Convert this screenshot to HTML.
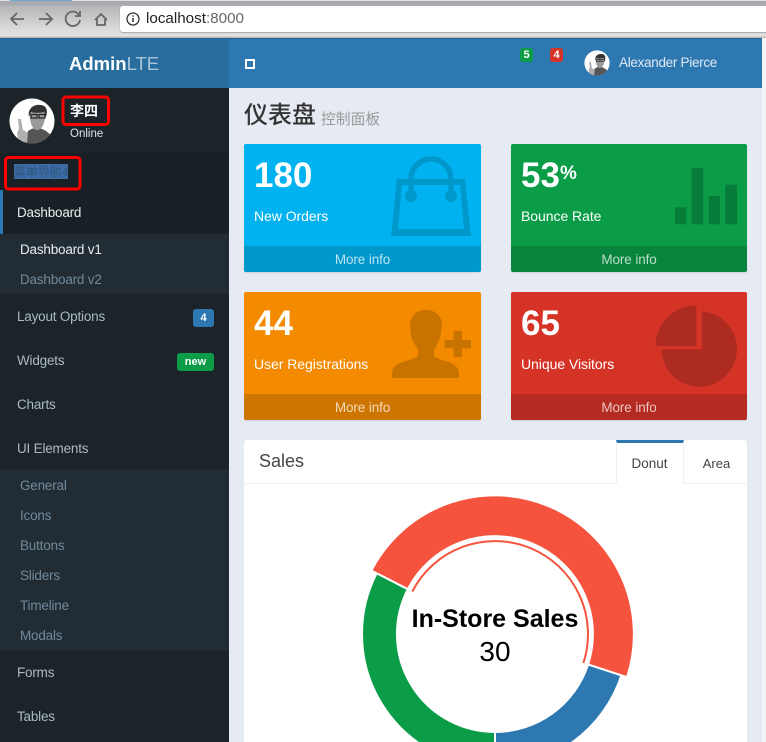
<!DOCTYPE html>
<html lang="en"><head><meta charset="utf-8"><title>AdminLTE</title>
<style>
html,body{margin:0;padding:0;width:766px;height:742px;overflow:hidden;background:#f3f4f6}
body{position:relative;font-family:"Liberation Sans","Noto Sans CJK SC",sans-serif;font-size:14px}
div,span.a{position:absolute;white-space:nowrap}
.t{height:20px;line-height:20px}
.nav{left:17px;color:#a9bac3;font-size:13.5px;letter-spacing:-.2px;margin-top:1px}
.sub{left:20px;color:#72899a;font-size:13.5px;letter-spacing:-.2px;margin-top:1px}
.card{width:237px;height:128px;border-radius:2px;box-shadow:0 1px 1px rgba(0,0,0,.1);overflow:hidden}
.num{left:10px;top:11px;font-size:35px;line-height:42px;font-weight:bold;color:#fff}
.lab{left:10px;top:62px;font-size:14px;line-height:20px;color:#fff;letter-spacing:-.05px}
.foot{left:0;right:0;top:102px;height:26px;line-height:27px;text-align:center;background:rgba(0,0,0,.15);color:rgba(255,255,255,.72);font-size:13.5px;letter-spacing:-.1px}
.badge{border-radius:3px;color:#fff;font-weight:bold;text-align:center}
</style></head>
<body>
<!-- browser chrome -->
<div style="left:0;top:0;width:766px;height:38px;background:linear-gradient(#a9aab0 0,#a9aab0 5px,#b5b5b7 6px,#dcdcdc 30px,#e3e3e3 36px,#bdbdbd 37px)"></div>
<div style="left:0;top:0;width:766px;height:1px;background:#dfe0e2"></div>
<div style="left:10px;top:0;width:62px;height:1px;background:#6fa6cf"></div>
<svg style="position:absolute;left:0;top:0" width="120" height="38" fill="none" stroke="#666" stroke-width="1.8">
<path d="M24 19H11M17 13l-6 6 6 6"/>
<path d="M39 19h13M46 13l6 6-6 6"/>
<path d="M79 15a7.2 7.2 0 1 0 1 5"/><path d="M80 11v5h-5" />
<path d="M95 20l6-6 6 6M97 19v6h8v-6"/>
</svg>
<div style="left:120px;top:6px;width:646px;height:26px;background:#fff;border-radius:3px 0 0 3px;box-shadow:0 1px 1px rgba(0,0,0,.25)"></div>
<svg style="position:absolute;left:125px;top:11px" width="16" height="16" fill="none"><circle cx="8" cy="8" r="6" stroke="#333" stroke-width="1.3"/><path d="M8 7v4M8 4.4v1.4" stroke="#333" stroke-width="1.5"/></svg>
<div class="t" style="left:146px;top:9px;font-size:15.2px;color:#222">localhost<span style="color:#666">:8000</span></div>

<!-- header -->
<div style="left:0;top:38px;width:229px;height:50px;background:#296d9e"></div>
<div style="left:229px;top:38px;width:533px;height:50px;background:#2e78b2"></div>
<div style="left:0;top:38px;width:762px;height:1px;background:#24618e"></div>
<div style="left:69px;top:50px;height:28px;line-height:28px;font-size:18.5px;color:#fff"><b>Admin</b><span style="font-weight:normal;opacity:.6">LTE</span></div>
<div style="left:245px;top:59px;width:6px;height:6px;border:2px solid #fff"></div>
<div class="badge" style="left:520px;top:48px;width:13px;height:14px;line-height:14px;font-size:11px;background:#0a9c47">5</div>
<div class="badge" style="left:550px;top:48px;width:13px;height:14px;line-height:14px;font-size:11px;background:#d63327">4</div>
<div class="t" style="left:619px;top:53px;color:#dfeaf3;font-size:13.5px;letter-spacing:-.3px">Alexander Pierce</div>

<!-- sidebar -->
<div style="left:0;top:88px;width:229px;height:654px;background:#1c2429"></div>
<div style="left:0;top:153px;width:229px;height:37px;background:#192025"></div>
<div style="left:0;top:190px;width:229px;height:44px;background:#192025"></div>
<div style="left:0;top:190px;width:2.5px;height:44px;background:#2e78b2"></div>
<div style="left:0;top:234px;width:229px;height:60px;background:#212c35"></div>
<div style="left:0;top:470px;width:229px;height:180px;background:#212c35"></div>
<div style="left:229px;top:88px;width:533px;height:654px;background:#e6eaf2"></div>

<svg style="position:absolute;left:0;top:0" width="766" height="742">
<defs>
<clipPath id="av"><circle cx="32" cy="32" r="22.5"/></clipPath>
<g id="face"><circle cx="32" cy="32" r="22.5" fill="#fff"/>
<g clip-path="url(#av)">
<path d="M24 56L28 42C33 38 40 38 46 42L56 50V60H24Z" fill="#555"/>
<path d="M30 26C30 20 45 20 45 26C45 34 42 41 37 41C33 41 31 36 30 30Z" fill="#9a9a9a"/>
<path d="M29 28C27 18 36 15 40 16C47 16 48 22 46 28L44 23C40 24 34 24 31 23Z" fill="#333"/>
<rect x="31" y="25.500" width="6" height="3.500" fill="none" stroke="#222" stroke-width="1.200"/>
<rect x="39" y="25.500" width="6" height="3.500" fill="none" stroke="#222" stroke-width="1.200"/>
<path d="M18 30L21 30L23 41L28 44L27 54H19L17 44L19 40Z" fill="#b0b0b0"/>
</g></g>
</defs>
<use href="#face" x="0" y="89"/>
<g transform="translate(597,63) scale(.56) translate(-32,-32)"><use href="#face"/></g>

<!-- red highlight rectangles -->
<rect x="63" y="97" width="45.500" height="27.500" rx="3" fill="none" stroke="#fe0000" stroke-width="3"/>
<rect x="14" y="164" width="54" height="15" fill="#3d6ba5"/>
<rect x="5.500" y="157.500" width="74.500" height="31.500" rx="3" fill="none" stroke="#fe0000" stroke-width="3"/>
</svg>

<!-- sidebar text -->
<div class="t" style="left:70px;top:101px;color:#fff;font-size:14px;font-weight:bold">李四</div>
<div class="t" style="left:70px;top:124px;color:#dfe5e8;font-size:11.500px">Online</div>
<div class="t" style="left:14px;top:162px;color:#30567a;font-size:12px">菜单导航4</div>
<div class="t nav" style="top:202px;color:#e8eef0">Dashboard</div>
<div class="t sub" style="top:239px;color:#e8eef0">Dashboard v1</div>
<div class="t sub" style="top:269px">Dashboard v2</div>
<div class="t nav" style="top:306px">Layout Options</div>
<div class="t nav" style="top:350px">Widgets</div>
<div class="t nav" style="top:394px">Charts</div>
<div class="t nav" style="top:438px">UI Elements</div>
<div class="t sub" style="top:475px">General</div>
<div class="t sub" style="top:505px">Icons</div>
<div class="t sub" style="top:535px">Buttons</div>
<div class="t sub" style="top:565px">Sliders</div>
<div class="t sub" style="top:595px">Timeline</div>
<div class="t sub" style="top:625px">Modals</div>
<div class="t nav" style="top:662px">Forms</div>
<div class="t nav" style="top:706px">Tables</div>
<div class="badge" style="left:193px;top:309px;width:21px;height:18px;line-height:18px;font-size:11px;background:#2e78b2">4</div>
<div class="badge" style="left:177px;top:353px;width:37px;height:18px;line-height:18px;font-size:11px;background:#0a9c47">new</div>

<!-- page title -->
<div style="left:244px;top:100px;height:32px;line-height:32px;font-size:24px;font-weight:500;color:#333">仪表盘</div>
<div style="left:321px;top:109px;height:22px;line-height:22px;font-size:14.800px;color:#999">控制面板</div>

<!-- cards -->
<div class="card" style="left:244px;top:144px;background:#00b2ef"><div class="num">180</div><div class="lab">New Orders</div><div class="foot">More info</div></div>
<div class="card" style="left:511px;top:144px;width:236px;background:#0a9c47"><div class="num">53<span style="font-size:19px;font-weight:bold;position:relative;top:-8px">%</span></div><div class="lab">Bounce Rate</div><div class="foot">More info</div></div>
<div class="card" style="left:244px;top:292px;background:#f38a00"><div class="num">44</div><div class="lab">User Registrations</div><div class="foot">More info</div></div>
<div class="card" style="left:511px;top:292px;width:236px;background:#d63327"><div class="num">65</div><div class="lab">Unique Visitors</div><div class="foot">More info</div></div>

<!-- card icons -->
<svg style="position:absolute;left:0;top:0" width="766" height="742">
<g fill="#0097cb">
<path fill-rule="evenodd" d="M397 179H465L471 236H391ZM402 185L398 229H464L460 185Z"/>
<circle cx="411" cy="196" r="6"/><circle cx="451" cy="196" r="6"/>
<path d="M411 196V179A20 20 0 0 1 451 179V196" fill="none" stroke="#0097cb" stroke-width="5.500"/>
</g>
<path fill="#c87200" d="M426 310C436 310 442 316 442 326L441 332C441 338 437 346 434 350V356C440 362 458 360 459 373V378H392V373C393 360 412 362 418 356V349C414 344 411 338 410.500 332L410 326C410 316 416 310 426 310Z"/>
<path fill="#c87200" d="M453.700 331H462V340H471V348.300H462V357H453.700V348.300H444.700V340H453.700Z"/>
<g fill="#077c38"><rect x="675" y="207.300" width="11.300" height="17"/><rect x="691.700" y="168" width="11.600" height="56.300"/><rect x="708.700" y="196" width="11.300" height="28.300"/><rect x="725.300" y="184.700" width="11.700" height="39.600"/></g>
<path fill="#ad2b20" d="M696.300 305.300V346H655.600A40.700 40.700 0 0 1 696.300 305.300Z"/>
<path fill="#ad2b20" d="M702 311.400A37.700 37.700 0 1 1 661.600 349.300H702Z"/>
</svg>

<!-- sales box -->
<div style="left:244px;top:440px;width:503px;height:302px;background:#fff;border-radius:3px 3px 0 0"></div>
<div style="left:244px;top:483px;width:503px;height:1px;background:#f0f1f3"></div>
<div style="left:616px;top:440px;width:68px;height:44px;background:#fff;border-left:1px solid #f0f1f3;border-right:1px solid #f0f1f3;box-sizing:border-box;border-top:3px solid #2e78b2"></div>
<div style="left:259px;top:449px;height:24px;line-height:24px;font-size:18px;color:#444">Sales</div>
<div class="t" style="left:616px;width:67px;top:454px;text-align:center;color:#444;font-size:13.500px">Donut</div>
<div class="t" style="left:685px;width:63px;top:454px;text-align:center;color:#444;font-size:13px">Area</div>

<svg style="position:absolute;left:0;top:0" width="766" height="742">
<path fill="#0a9c47" stroke="#fff" stroke-width="2" d="M495 767A133 133 0 0 1 376.700 573.200L407.800 589.200A98 98 0 0 0 495 732Z"/>
<path fill="#2e78b2" stroke="#fff" stroke-width="2" d="M495 767A133 133 0 0 0 621.400 675.300L588.100 664.400A98 98 0 0 1 495 732Z"/>
<path fill="#f5533d" stroke="#fff" stroke-width="2" d="M371.400 570.500A139 139 0 0 1 627.100 677.200L588.100 664.400A98 98 0 0 0 407.800 589.200Z"/>
<path fill="none" stroke="#f5533d" stroke-width="2" d="M412.300 591.500A93 93 0 0 1 583.400 662.900"/>
<text x="495" y="627" text-anchor="middle" font-family="Liberation Sans" font-weight="bold" font-size="25" fill="#000">In-Store Sales</text>
<text x="495" y="661" text-anchor="middle" font-family="Liberation Sans" font-size="28" fill="#000">30</text>
</svg>
</body></html>
